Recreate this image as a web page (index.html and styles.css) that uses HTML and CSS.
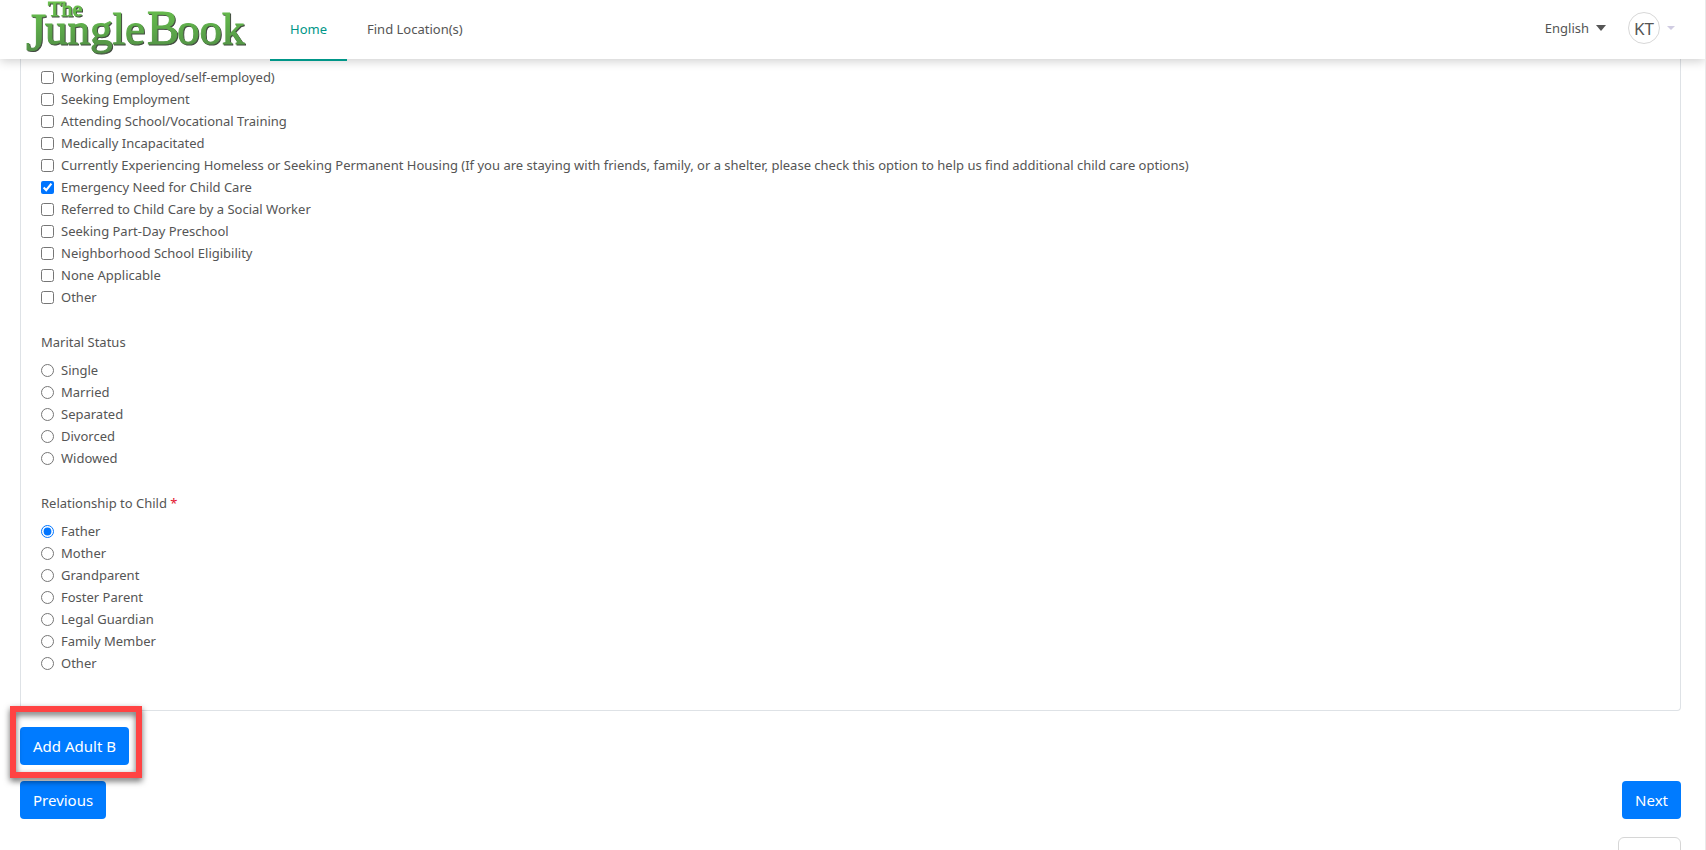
FILE: index.html
```html
<!DOCTYPE html>
<html lang="en">
<head>
    <meta charset="UTF-8">
    <meta name="viewport" content="width=device-width, initial-scale=1.0">
    <title>The Jungle Book</title>
    <link rel="stylesheet" href="styles.css">
</head>
<body>

    <header class="header">
        <a class="logo" href="#" aria-label="The Jungle Book">
            <svg width="222" height="59" viewBox="0 0 222 59">
                <defs>
                    <linearGradient id="leaf" gradientUnits="userSpaceOnUse" x1="0" y1="0" x2="0" y2="56">
                        <stop offset="0" stop-color="#6cc24e"/>
                        <stop offset="0.4" stop-color="#60b14b"/>
                        <stop offset="1" stop-color="#4f8a45"/>
                    </linearGradient>
                </defs>
                <g class="logo-text" fill="url(#leaf)" stroke="url(#leaf)">
                    <text x="22" y="16" font-size="22">The</text>
                    <text x="0" y="50" font-size="52">J</text>
                    <text x="19" y="44" font-size="45">ungle</text>
                    <text x="121" y="44" font-size="48">B</text>
                    <text x="151" y="44" font-size="45">ook</text>
                </g>
            </svg>
        </a>
        <nav class="nav">
            <a class="nav-link active" href="#">Home</a>
            <a class="nav-link" href="#">Find Location(s)</a>
        </nav>
        <div class="user-menu">
            <button class="language" type="button">English
                <svg width="10" height="6" viewBox="0 0 10 6"><path d="M0 0h10L5 6z" fill="#555"/></svg>
            </button>
            <button class="account" type="button">
                <span class="avatar">KT</span>
                <svg width="8" height="4" viewBox="0 0 8 4"><path d="M0 0h8L4 4z" fill="#d0cce2"/></svg>
            </button>
        </div>
    </header>

    <main class="content">
        <form class="form">
            <div class="card">
                <div class="group">
                    <label class="option"><input type="checkbox" name="need"> Working (employed/self-employed)</label>
                    <label class="option"><input type="checkbox" name="need"> Seeking Employment</label>
                    <label class="option"><input type="checkbox" name="need"> Attending School/Vocational Training</label>
                    <label class="option"><input type="checkbox" name="need"> Medically Incapacitated</label>
                    <label class="option"><input type="checkbox" name="need"> Currently Experiencing Homeless or Seeking Permanent Housing (If you are staying with friends, family, or a shelter, please check this option to help us find additional child care options)</label>
                    <label class="option"><input type="checkbox" name="need" checked> Emergency Need for Child Care</label>
                    <label class="option"><input type="checkbox" name="need"> Referred to Child Care by a Social Worker</label>
                    <label class="option"><input type="checkbox" name="need"> Seeking Part-Day Preschool</label>
                    <label class="option"><input type="checkbox" name="need"> Neighborhood School Eligibility</label>
                    <label class="option"><input type="checkbox" name="need"> None Applicable</label>
                    <label class="option"><input type="checkbox" name="need"> Other</label>
                </div>

                <div class="group" role="radiogroup" aria-labelledby="marital">
                    <p class="group-title" id="marital">Marital Status</p>
                    <label class="option"><input type="radio" name="marital"> Single</label>
                    <label class="option"><input type="radio" name="marital"> Married</label>
                    <label class="option"><input type="radio" name="marital"> Separated</label>
                    <label class="option"><input type="radio" name="marital"> Divorced</label>
                    <label class="option"><input type="radio" name="marital"> Widowed</label>
                </div>

                <div class="group" role="radiogroup" aria-labelledby="relationship">
                    <p class="group-title" id="relationship">Relationship to Child <span class="required">*</span></p>
                    <label class="option"><input type="radio" name="relationship" checked> Father</label>
                    <label class="option"><input type="radio" name="relationship"> Mother</label>
                    <label class="option"><input type="radio" name="relationship"> Grandparent</label>
                    <label class="option"><input type="radio" name="relationship"> Foster Parent</label>
                    <label class="option"><input type="radio" name="relationship"> Legal Guardian</label>
                    <label class="option"><input type="radio" name="relationship"> Family Member</label>
                    <label class="option"><input type="radio" name="relationship"> Other</label>
                </div>
            </div>

            <div class="highlight">
                <button class="btn" type="button">Add Adult B</button>
            </div>

            <div class="actions">
                <button class="btn" type="button">Previous</button>
                <button class="btn" type="button">Next</button>
            </div>
            <div class="bottom-box"></div>
        </form>
    </main>

</body>
</html>
```

FILE: styles.css
```css
* {
    margin: 0;
    padding: 0;
    box-sizing: border-box;
}
body {
    height: 100vh;
    overflow: hidden;
    font-family: 'Segoe UI', 'Noto Sans', sans-serif;
    font-size: 13px;
    line-height: 22px;
    color: #555;
    background-color: #fff;
    border-right: 1px solid #e9e9e9;
}
button {
    font: inherit;
    color: inherit;
    background: none;
    border: none;
    cursor: pointer;
}
.header {
    position: relative;
    z-index: 1;
    display: flex;
    height: 59px;
    padding: 0 30px 0 26px;
    background-color: #fff;
    box-shadow: 0 2px 10px rgba(0, 0, 0, 0.2);
}
.logo {
    margin-right: 22px;
}
.logo svg {
    display: block;
    overflow: visible;
    filter: drop-shadow(1px 1px 0 #41493f);
}
.logo-text {
    font-family: 'Liberation Serif', serif;
    stroke-width: 1;
}
.nav {
    display: flex;
}
.nav-link {
    height: 61px;
    padding: 18px 20px 0;
    color: #555;
    text-decoration: none;
}
.nav-link.active {
    color: #009688;
    border-bottom: 2px solid #009688;
}
.user-menu {
    display: flex;
    align-items: center;
    gap: 22px;
    height: 56px;
    margin-left: auto;
}
.language, .account {
    display: flex;
    align-items: center;
    gap: 7px;
}
.avatar {
    width: 32px;
    height: 32px;
    border: 1px solid #d8d8d8;
    border-radius: 50%;
    font-size: 17px;
    line-height: 31px;
    text-align: center;
}
.content {
    padding: 0 24px 0 20px;
}
.card {
    display: flex;
    flex-direction: column;
    gap: 23px;
    padding: 7px 20px 36px;
    border: 1px solid #dee2e6;
    border-top: none;
    border-radius: 0 0 4px 4px;
}
.group-title {
    margin-bottom: 6px;
}
.required {
    color: #e3122f;
}
.option {
    display: flex;
    align-items: center;
    gap: 7px;
}
.option input {
    flex: none;
    width: 13px;
    height: 13px;
}
.btn {
    height: 38px;
    padding: 0 13px;
    border-radius: 4px;
    font-size: 15px;
    color: #fff;
    background-color: #007bff;
}
.highlight {
    position: relative;
    width: fit-content;
    margin: 16px 0;
}
.highlight::after {
    content: "";
    position: absolute;
    inset: -21px -13px -13px -10px;
    border: 6px solid #ff4343;
    filter: drop-shadow(0 3px 3px rgba(0, 0, 0, 0.6));
    pointer-events: none;
}
.actions {
    display: flex;
    justify-content: space-between;
}
.bottom-box {
    width: 63px;
    height: 38px;
    margin: 18px 0 0 auto;
    border: 1px solid #d6d6d6;
    border-radius: 6px;
}
```
